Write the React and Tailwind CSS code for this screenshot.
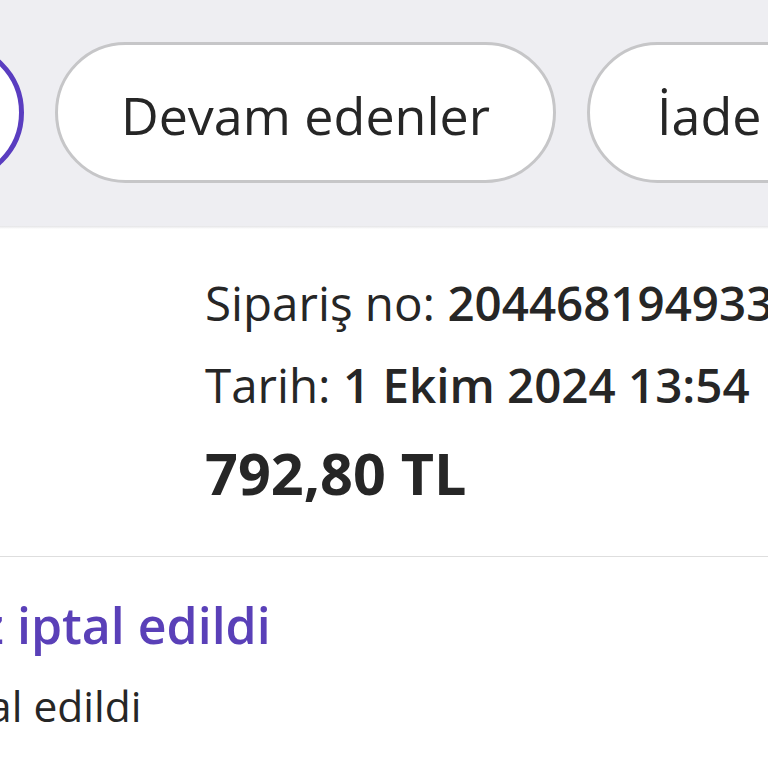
export default function App() {
  const font = { fontFamily: '"Open Sans", "Noto Sans", sans-serif' };
  return (
    <div className="w-[768px] h-[768px] overflow-hidden bg-white text-[#262626]" style={font}>
      <div className="bg-[#eeeef2] pt-[42px] pb-[43px] overflow-hidden">
        <div className="flex gap-[31px] whitespace-nowrap">
          <div className="shrink-0 w-[220px] h-[141px] -ml-[196px] rounded-full border-[5px] border-[#5a3dc0] bg-white"></div>
          <div className="shrink-0 h-[141px] w-[501px] rounded-full border-[3px] border-[#c6c6c8] bg-white flex items-center justify-center pt-1 text-[52px]">
            Devam edenler
          </div>
          <div className="shrink-0 h-[141px] w-[400px] rounded-full border-[3px] border-[#c6c6c8] bg-white flex items-center pl-[67px] pt-1 text-[52px]">
            İade
          </div>
        </div>
      </div>
      <div className="h-[3px] bg-gradient-to-b from-[#e4e4e6] to-white"></div>
      <div className="pl-[205px] pt-[33px] pb-[48px] border-b border-[#dedede] whitespace-nowrap overflow-hidden">
        <div className="text-[47.5px] leading-[82px]">
          Sipariş no: <span className="font-semibold">204468194933</span>
        </div>
        <div className="text-[47.5px] leading-[82px]">
          Tarih: <span className="font-semibold">1 Ekim 2024 13:54</span>
        </div>
        <div className="mt-[12px] text-[57.5px] leading-[70px] font-bold">792,80 TL</div>
      </div>
      <div className="pt-[38px] whitespace-nowrap overflow-hidden">
        <div className="-ml-[241px] text-[50px] leading-[60px] font-semibold text-[#5a40b8]">
          Siparişiniz iptal edildi
        </div>
        <div className="mt-[23px] -ml-[65px] text-[42.5px] leading-[56px]">
          İptal edildi
        </div>
      </div>
    </div>
  );
}
